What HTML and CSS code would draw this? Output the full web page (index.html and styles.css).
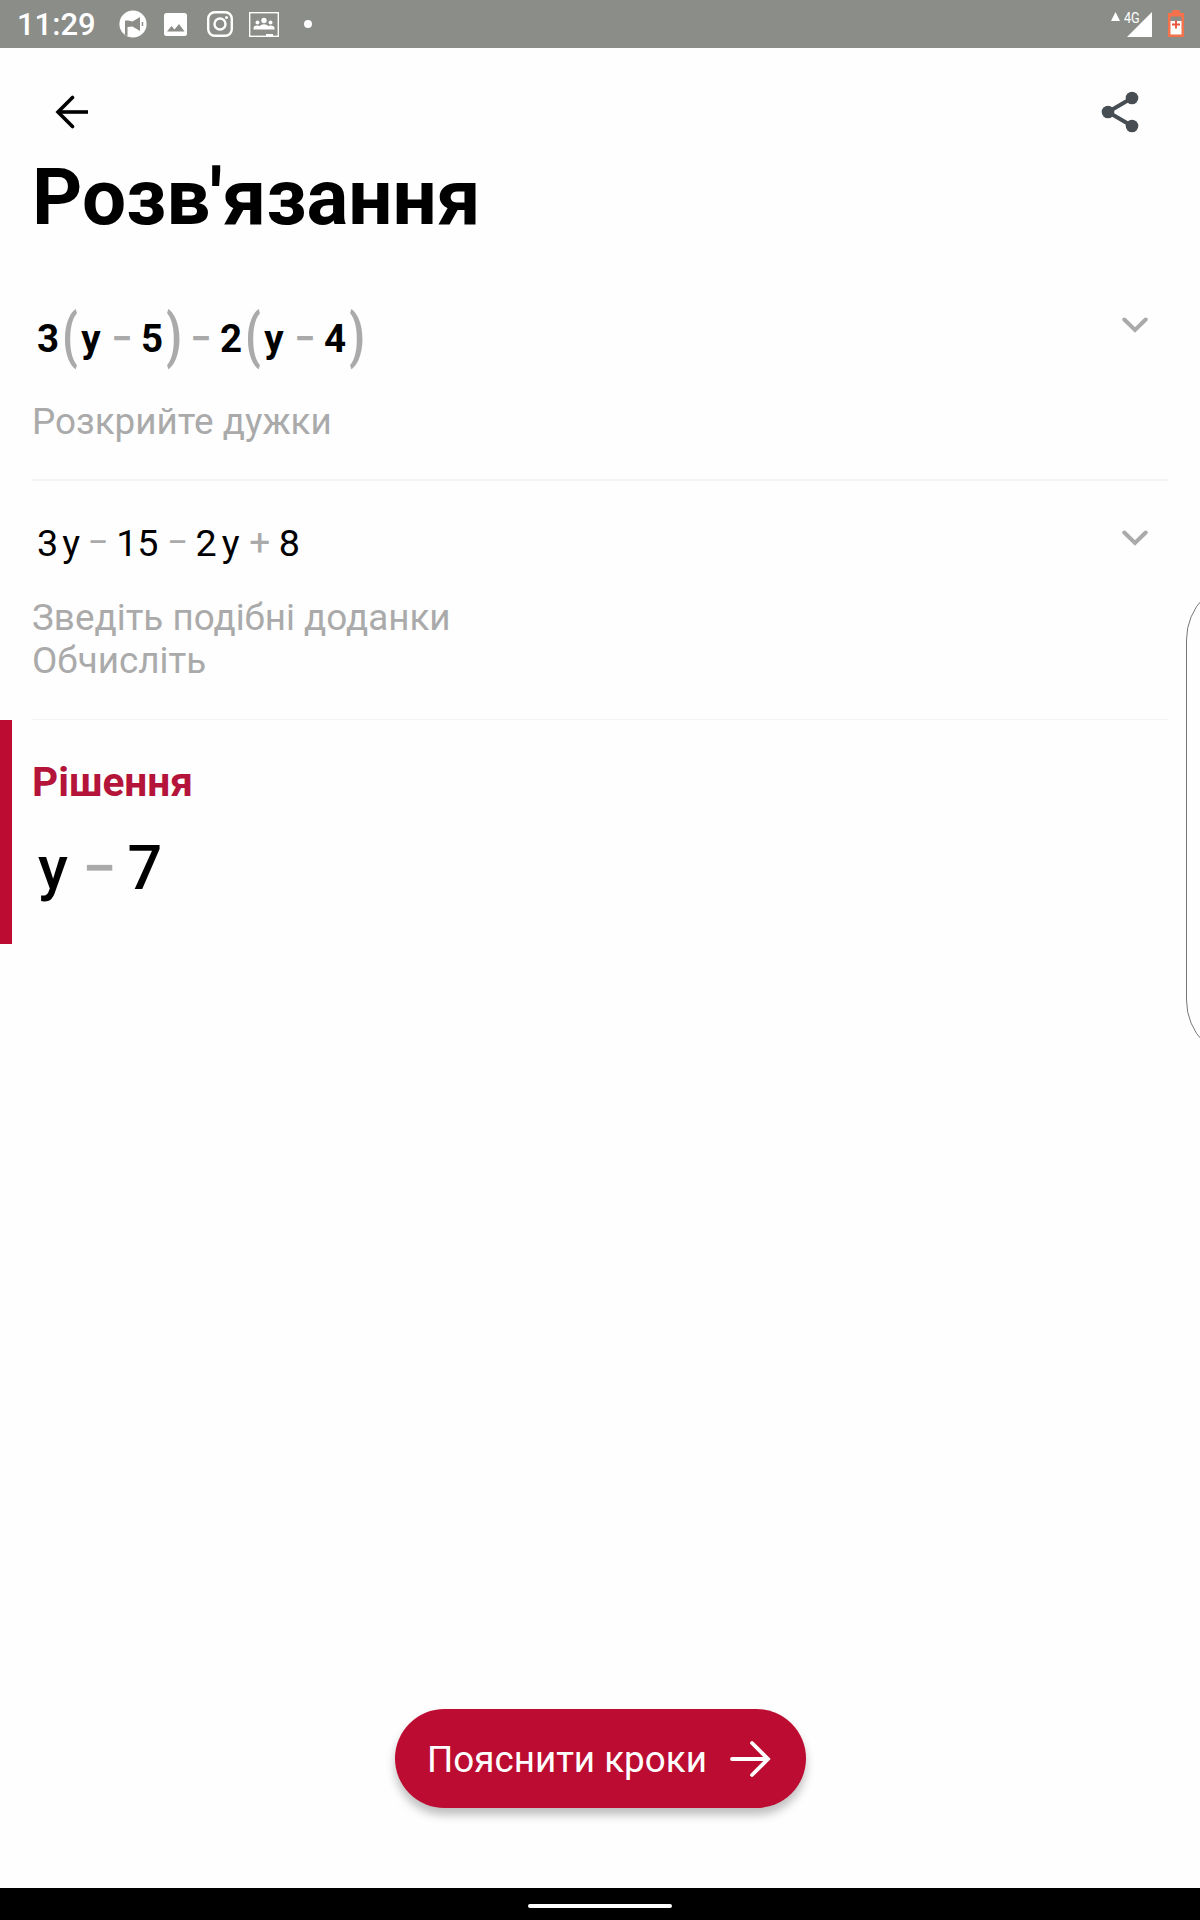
FILE: index.html
```html
<!DOCTYPE html>
<html lang="uk">
<head>
<meta charset="utf-8">
<title>Розв'язання</title>
<link rel="stylesheet" href="styles.css">
</head>
<body>
<div class="screen">
  <header class="status">
    <span class="clock">11:29</span>
    <svg class="icon-mega" width="28" height="28" viewBox="0 0 28 28"><circle cx="14" cy="14" r="13.600" fill="#fff"/><path d="M6 11q0-.500.500-.500H9l4.500 1L21 7v14l-7.500-4.500L8.500 17v9L6 25z" fill="#8b8d89"/><path d="M23.500 12v4" stroke="#8b8d89" stroke-width="1.500"/></svg>
    <svg class="icon-photo" width="23" height="23" viewBox="0 0 23 23"><rect width="23" height="23" rx="2.500" fill="#fff"/><path d="M3 18.500l4.500-5.500 3 3.500 4.500-5.500 5.500 7.500z" fill="#8b8d89"/></svg>
    <svg class="icon-insta" width="26" height="26" viewBox="0 0 26 26" fill="none" stroke="#fff" stroke-width="2.400"><rect x="1.200" y="1.200" width="23.600" height="23.600" rx="6.500"/><circle cx="13" cy="13" r="5.500"/><circle cx="19.500" cy="6.500" r="1.500" fill="#fff" stroke="none"/></svg>
    <svg class="icon-class" width="30" height="25" viewBox="0 0 30 25"><rect x=".7" y=".7" width="28.600" height="23.600" fill="none" stroke="#fff" stroke-width="1.400"/><g fill="#fff"><circle cx="15" cy="8.500" r="2.700"/><circle cx="8.500" cy="10.500" r="2"/><circle cx="21.500" cy="10.500" r="2"/><path d="M4.500 17.500V16q0-2.500 4-2.500 1.500 0 2.300.6Q12 12.300 15 12.300t4.200 1.800q.8-.6 2.300-.6 4 0 4 2.500v1.500zM17 22h7v2h-7z"/></g></svg>
    <span class="dot"></span>
    <span class="spacer"></span>
    <svg class="icon-up" width="9" height="9" viewBox="0 0 9 9"><path d="M4.500 0L9 9H0z" fill="#fff"/></svg>
    <span class="net">4G</span>
    <svg class="icon-signal" width="25" height="25" viewBox="0 0 25 25"><path d="M25 0v25H0z" fill="#fff"/></svg>
    <svg class="icon-battery" width="16" height="27" viewBox="0 0 16 27"><path d="M5 0h6l1.500 3H16v24H0V3h3.500z" fill="#f4714c"/><path d="M2.500 6.500h11V11h-11z" fill="#8b8d89"/><path d="M2.500 11h11v13.500h-11z" fill="#fff"/><path d="M8 10.500v8M4 14.500h8" stroke="#e8573a" stroke-width="1.900"/></svg>
  </header>

  <nav class="toolbar">
    <svg width="34" height="34" viewBox="0 0 34 34" fill="none" stroke="#000" stroke-width="3.600"><path d="M33 17H4" /><path d="M17.500 2.500L3 17l14.500 14.500" stroke-linecap="round"/></svg>
    <svg width="38" height="42" viewBox="0 0 38 42"><path d="M31 7L7 21l24 14" fill="none" stroke="#474e53" stroke-width="4"/><g fill="#474e53"><circle cx="31" cy="7" r="6.300"/><circle cx="7" cy="21" r="6.300"/><circle cx="31" cy="35" r="6.300"/></g></svg>
  </nav>

  <main>
    <h1>Розв'язання</h1>

    <section class="step step-open">
      <div class="expr bold"><span class="num">3</span><span class="par open">(</span><span class="var">y</span><span class="op">−</span><span class="num">5</span><span class="par close">)</span><span class="op">−</span><span class="num">2</span><span class="par open">(</span><span class="var">y</span><span class="op">−</span><span class="num">4</span><span class="par close">)</span></div>
      <p class="hint">Розкрийте дужки</p>
      <svg class="chevron" width="26" height="16" viewBox="0 0 26 16"><path d="M2.300 2.500L13 13 23.700 2.500" fill="none" stroke="#aaa" stroke-width="4" stroke-linecap="round"/></svg>
    </section>

    <section class="step step-combine">
      <div class="expr"><span class="num">3</span><span class="var">y</span><span class="op">−</span><span class="num">15</span><span class="op">−</span><span class="num">2</span><span class="var">y</span><span class="op plus">+</span><span class="num">8</span></div>
      <p class="hint">Зведіть подібні доданки<br>Обчисліть</p>
      <svg class="chevron" width="26" height="16" viewBox="0 0 26 16"><path d="M2.300 2.500L13 13 23.700 2.500" fill="none" stroke="#aaa" stroke-width="4" stroke-linecap="round"/></svg>
    </section>

    <section class="answer">
      <h2>Рішення</h2>
      <div class="result"><span>y</span><span class="op">−</span><span>7</span></div>
    </section>
  </main>

  <button class="explain" type="button">
    <span>Пояснити кроки</span>
    <svg width="42" height="38" viewBox="0 0 42 38" fill="none" stroke="#fff" stroke-width="3.800" stroke-linecap="round"><path d="M3 19h36M23 3l16 16-16 16"/></svg>
  </button>

  <footer class="navbar"><span class="pill"></span></footer>
  <div class="edge-panel"></div>
</div>
</body>
</html>
```

FILE: styles.css
```css
* { box-sizing: border-box; }
body { margin: 0; background: #fefefe; font-family: Roboto, sans-serif; color: #000; }
h1, h2, p { margin: 0; }
svg { display: block; flex: none; }

.screen { position: relative; display: flex; flex-direction: column; width: 1200px; height: 1920px; overflow: hidden; }

.status { display: flex; align-items: center; height: 48px; padding: 0 16px; background: #8b8d89; color: #fff; flex: none; }
.clock { width: 103px; padding: 2px 0 0 1px; font-size: 31px; font-weight: 500; line-height: 48px; white-space: nowrap; }
.icon-mega { margin-right: 17px; }
.icon-photo { margin-right: 20px; }
.icon-insta { margin-right: 16px; }
.icon-class { margin-right: 25px; }
.dot { width: 8px; height: 8px; border-radius: 50%; background: #fff; }
.spacer { flex: 1; }
.icon-up { margin: 0 4px 16px 0; }
.net { width: 15px; margin-bottom: 12px; font-size: 14px; line-height: 16px; transform: scaleX(.9); transform-origin: left; }
.icon-signal { margin: 0 16px 0 -12px; }
.icon-battery { margin-top: -2px; }

.toolbar { display: flex; align-items: center; justify-content: space-between; height: 128px; padding: 0 61px 0 55px; margin-bottom: -24px; flex: none; }

main { flex: 1; }
h1 { padding-left: 32px; height: 136px; font-size: 78.200px; line-height: 91px; font-weight: 700; }

.step { position: relative; margin: 0 32px; border-bottom: 2px solid #f4f4f4; }
.step-open { height: 193px; padding-top: 20px; }
.step-combine { height: 239px; padding-top: 31px; border-bottom-width: 1px; }
.chevron { position: absolute; right: 20.500px; top: 29px; }
.step-combine .chevron { top: 49px; }

.expr { display: flex; align-items: center; height: 62px; padding-left: 5px; font-size: 37.700px; line-height: 62px; }
.bold { padding-left: 5px; font-size: 38.500px; font-weight: 700; }
.expr span { display: flex; justify-content: center; }
.expr .var { width: 18px; margin-left: 4px; }
.expr .op { width: 16px; margin: 0 10px; color: #aaa; font-size: 37px; }
.expr .op + .num { margin-right: 1px; }
.expr .plus { width: 18px; margin-left: 11px; }
.bold .num { width: 22px; }
.bold .var { width: 20px; margin: 0; }
.bold .op { width: 18px; margin: 0 10px 0 12px; }
.bold .op + .num { margin-right: 0; }
.par { width: 14px; margin-top: -6px; font-size: 60px; font-weight: 700; color: #aaa; transform: scaleX(.74); }
.bold .open { margin: -6px 4px 0; }
.bold .close { margin-left: 4px; margin-right: -1px; }

.hint { font-size: 36.850px; line-height: 43px; color: #aaa; }
.step-open .hint { margin-top: 30px; }
.step-combine .hint { margin-top: 22px; }

.answer { height: 224px; padding: 38px 0 0 32px; box-shadow: inset 12px 0 #bd0c31; }
h2 { font-size: 40.600px; line-height: 48px; font-weight: 700; color: #b5143a; }
.result { display: flex; padding-left: 6px; margin-top: 24px; font-size: 61px; line-height: 76px; font-weight: 500; }
.result .op { width: 26px; margin: 0 15px 0 18.500px; display: flex; justify-content: center; color: #aaa; font-size: 61px; }

.explain { display: flex; align-items: center; justify-content: space-between; align-self: center; width: 411px; height: 99px; margin: 0 0 80px; padding: 0 35px 0 32.500px; border: 0; border-radius: 50px; background: #bd0c31; color: #fff; font: 400 36.800px/44px Roboto, sans-serif; white-space: nowrap; box-shadow: 0 7px 10px rgba(0, 0, 0, .25); flex: none; }
.explain span { padding-top: 3px; }

.navbar { display: flex; justify-content: center; align-items: center; height: 32px; padding-top: 4px; background: #000; flex: none; }
.pill { width: 144px; height: 4px; border-radius: 2px; background: #fff; }

.edge-panel { position: absolute; left: 1186px; top: 579px; width: 130px; height: 482px; border: 1px solid #777; border-radius: 61px; background: #fefefe; }
```
